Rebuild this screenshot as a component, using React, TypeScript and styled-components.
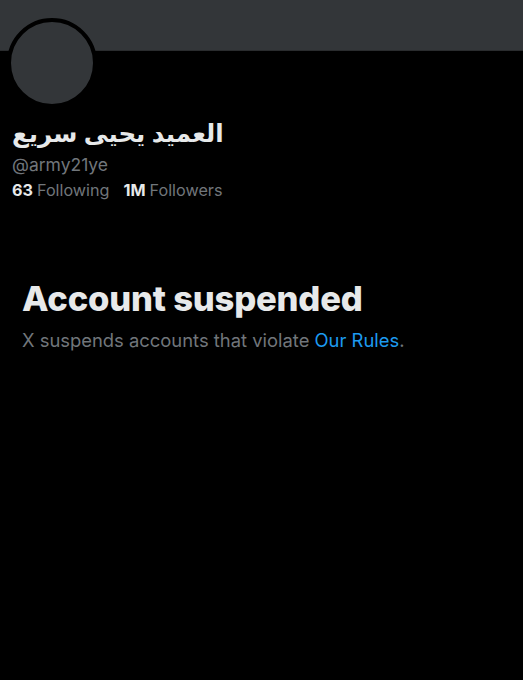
import * as React from "react";
import styled, { createGlobalStyle } from "styled-components";

const GlobalStyle = createGlobalStyle`
	html, body {
		margin: 0;
		padding: 0;
		background: #000;
	}
	body {
		font-family: Inter, "Noto Sans", sans-serif;
		color: #e7e9ea;
	}
`;

const Page = styled.div`
	width: 523px;
	height: 680px;
	background: #000;
	overflow: hidden;
`;

const Banner = styled.div`
	height: 50px;
	background: #333639;
	border-bottom: 1px solid #2a2c2e;
`;

const Header = styled.div`
	padding: 0 12px;
`;

const Avatar = styled.div`
	width: 82px;
	height: 82px;
	margin: -33px 0 0 -5px;
	border: 4px solid #000;
	border-radius: 50%;
	background: #333639;
`;

const Name = styled.h1`
	margin: 8px 0 0;
	font-family: "Noto Sans", "DejaVu Sans", sans-serif;
	font-size: 24.5px;
	font-weight: 700;
	line-height: 34px;
	color: #e7e9ea;
	text-align: left;
`;

const Handle = styled.div`
	margin-top: 4px;
	font-size: 17.5px;
	line-height: 22px;
	color: #71767b;
`;

const Stats = styled.div`
	display: flex;
	gap: 14px;
	margin-top: 4px;
	font-size: 16.2px;
	line-height: 20px;
	color: #71767b;
`;

const Stat = styled.span`
	b {
		color: #e7e9ea;
		font-weight: 700;
		margin-right: 4px;
	}
`;

const Notice = styled.section`
	padding: 78px 22px 0;
`;

const Title = styled.h2`
	margin: 0;
	font-size: 34.6px;
	font-weight: 800;
	line-height: 40px;
	letter-spacing: -0.2px;
	color: #e7e9ea;
`;

const Body = styled.p`
	margin: 10px 0 0;
	font-size: 18.4px;
	line-height: 24px;
	color: #71767b;

	a {
		color: #1d9bf0;
		text-decoration: none;
	}
`;

export default function App() {
	return (
		<Page>
			<GlobalStyle />
			<Banner />
			<Header>
				<Avatar />
				<Name dir="rtl" style={{ textAlign: "left" }}>
					العميد يحيى سريع
				</Name>
				<Handle>@army21ye</Handle>
				<Stats>
					<Stat>
						<b>63</b>Following
					</Stat>
					<Stat>
						<b>1M</b>Followers
					</Stat>
				</Stats>
			</Header>
			<Notice>
				<Title>Account suspended</Title>
				<Body>
					X suspends accounts that violate <a href="#">Our Rules</a>.
				</Body>
			</Notice>
		</Page>
	);
}
